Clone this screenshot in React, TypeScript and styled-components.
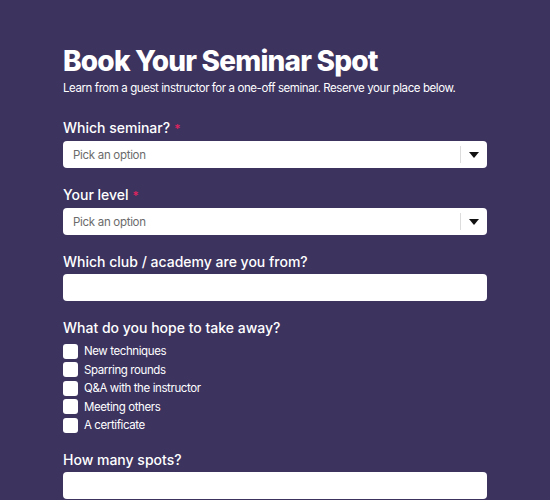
import React from 'react';
import styled, { createGlobalStyle } from 'styled-components';

const GlobalStyle = createGlobalStyle`
  body {
    margin: 0;
    background: #3c335f;
    font-family: Inter, "Noto Sans", sans-serif;
    color: #ffffff;
  }
`;

const Page = styled.main`
  width: 424px;
  margin: 0 auto;
  padding-top: 44px;
`;

const Title = styled.h1`
  margin: 0;
  font-size: 28px;
  line-height: 34px;
  font-weight: 800;
  letter-spacing: -0.8px;
`;

const Subtitle = styled.p`
  margin: 2px 0 23px;
  font-size: 11.5px;
  line-height: 16px;
  letter-spacing: -0.42px;
`;

const Field = styled.div`
  display: flex;
  flex-direction: column;
  margin-bottom: 18px;
`;

const Label = styled.label`
  font-size: 14px;
  line-height: 18px;
  font-weight: 500;
  margin-bottom: 3px;
`;

const Required = styled.span`
  color: #e0245e;
  margin-left: 4px;
  font-size: 12px;
`;

const SelectBox = styled.div`
  display: flex;
  align-items: center;
  height: 27px;
  background: #fff;
  border-radius: 4px;
  color: #6b6b6b;
  font-size: 11.5px;
  letter-spacing: -0.3px;
`;

const SelectText = styled.span`
  flex: 1;
  padding-left: 10px;
`;

const Divider = styled.span`
  width: 1px;
  height: 17px;
  background: #dcdcdc;
`;

const Caret = styled.span`
  width: 26px;
  display: flex;
  justify-content: center;
`;

const TextInput = styled.input`
  height: 27px;
  border: none;
  border-radius: 4px;
  background: #fff;
  padding: 0 10px;
  font: inherit;
  outline: none;
`;

const CheckList = styled.div`
  display: flex;
  flex-direction: column;
  gap: 2.5px;
  margin-top: 3px;
`;

const CheckRow = styled.label`
  display: flex;
  align-items: center;
  gap: 6px;
  font-size: 11.5px;
  line-height: 16px;
  letter-spacing: -0.4px;
`;

const Box = styled.span`
  width: 15px;
  height: 15px;
  background: #fff;
  border-radius: 3px;
`;

const Select = ({ placeholder }: { placeholder: string }) => (
  <SelectBox>
    <SelectText>{placeholder}</SelectText>
    <Divider />
    <Caret>
      <svg width="10" height="6" viewBox="0 0 10 6">
        <path d="M0 0h10L5 6z" fill="#111" />
      </svg>
    </Caret>
  </SelectBox>
);

const takeaways = [
  'New techniques',
  'Sparring rounds',
  'Q&A with the instructor',
  'Meeting others',
  'A certificate',
];

export default function App() {
  return (
    <>
      <GlobalStyle />
      <Page>
        <Title>Book Your Seminar Spot</Title>
        <Subtitle>Learn from a guest instructor for a one-off seminar. Reserve your place below.</Subtitle>

        <Field>
          <Label>Which seminar?<Required>*</Required></Label>
          <Select placeholder="Pick an option" />
        </Field>

        <Field>
          <Label>Your level<Required>*</Required></Label>
          <Select placeholder="Pick an option" />
        </Field>

        <Field>
          <Label>Which club / academy are you from?</Label>
          <TextInput type="text" />
        </Field>

        <Field>
          <Label>What do you hope to take away?</Label>
          <CheckList>
            {takeaways.map((t) => (
              <CheckRow key={t}>
                <Box />
                {t}
              </CheckRow>
            ))}
          </CheckList>
        </Field>

        <Field>
          <Label>How many spots?</Label>
          <TextInput type="number" />
        </Field>
      </Page>
    </>
  );
}
